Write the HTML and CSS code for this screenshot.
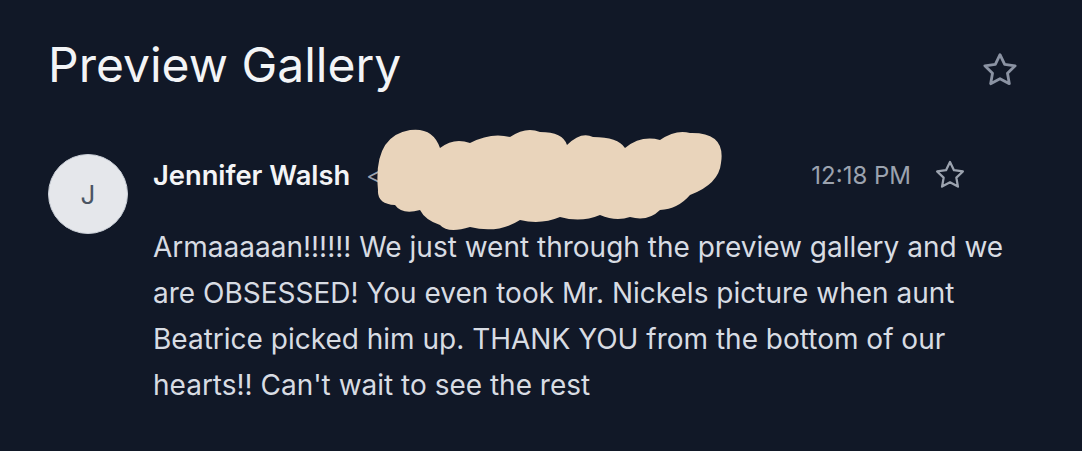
FILE: index.html
```html
<!DOCTYPE html>
<html lang="en">
<head>
  <meta charset="UTF-8" />
  <meta name="viewport" content="width=device-width, initial-scale=1.0"/>
  <title>Preview Gallery</title>
  <link rel="stylesheet" href="styles.css">
</head>
<body>
  <div class="thread">
    <div class="thread-header">
      <h1>Preview Gallery</h1>
      <button class="star-btn big" aria-label="Star thread">
        <svg viewBox="0 0 24 24" width="40" height="40"><path d="M12 2.8l2.8 5.8 6.3.9-4.6 4.4 1.1 6.3L12 17.2l-5.6 3 1.1-6.3-4.6-4.4 6.3-.9z"/></svg>
      </button>
    </div>

    <div class="message">
      <div class="avatar">J</div>
      <div class="message-body">
        <div class="message-meta">
          <span class="sender">Jennifer Walsh</span>
          <span class="email">&lt;</span>
          <!-- redacted address -->
          <svg class="redact" viewBox="0 0 350 105" width="350" height="105">
            <path fill="#e9d4bb" d="M2,62 Q-3,8 34,2 Q57,-1 64,20 Q78,9 94,15 Q115,4 134,9 Q150,-2 164,4 Q187,4 191,17 Q205,3 217,9 Q242,9 249,20 Q265,7 284,12 Q300,1 314,5 Q350,4 345,35 Q343,56 314,67 Q302,81 284,82 Q272,94 254,89 Q240,94 224,87 Q205,95 184,89 Q165,97 144,92 Q122,106 94,99 Q72,106 64,97 Q49,92 44,82 Q26,87 19,77 Q1,76 2,62 Z"/>
          </svg>
          <span class="time">12:18 PM</span>
          <button class="star-btn" aria-label="Star message">
            <svg viewBox="0 0 24 24" width="34" height="34"><path d="M12 2.8l2.8 5.8 6.3.9-4.6 4.4 1.1 6.3L12 17.2l-5.6 3 1.1-6.3-4.6-4.4 6.3-.9z"/></svg>
          </button>
        </div>
        <p class="text">Armaaaaan!!!!!! We just went through the preview gallery and we are OBSESSED! You even took Mr. Nickels picture when aunt Beatrice picked him up. THANK YOU from the bottom of our hearts!! Can't wait to see the rest</p>
      </div>
    </div>
  </div>
</body>
</html>
```

FILE: styles.css
```css
body {
  margin: 0;
  background: #111827;
  font-family: 'Inter', 'Noto Sans', sans-serif;
  color: #e5e7eb;
}

.thread {
  padding: 34px 48px 0 48px;
}

.thread-header {
  display: flex;
  align-items: center;
  justify-content: space-between;
  padding-right: 14px;
}

h1 {
  margin: 0;
  font-size: 48px;
  font-weight: 400;
  color: #f3f4f6;
  line-height: 62px;
}

.star-btn {
  background: none;
  border: none;
  padding: 0;
  cursor: pointer;
  display: flex;
}

.star-btn svg {
  fill: none;
  stroke: #9ca3af;
  stroke-width: 1.6;
  stroke-linejoin: round;
}

.star-btn.big {
  margin-top: 9px;
}

.star-btn.big svg {
  stroke: #8b93a3;
  stroke-width: 1.7;
}

.message {
  display: flex;
  align-items: flex-start;
  gap: 25px;
  margin-top: 58px;
}

.avatar {
  flex: none;
  width: 78px;
  height: 78px;
  border-radius: 50%;
  background: #e5e7eb;
  border: 1px solid #cbd0d8;
  color: #4b5563;
  font-size: 26px;
  display: flex;
  align-items: center;
  justify-content: center;
}

.message-body {
  flex: 1;
}

.message-meta {
  position: relative;
  display: flex;
  align-items: center;
  height: 48px;
  margin-top: -3px;
  padding-right: 67px;
}

.sender {
  font-size: 27.3px;
  font-weight: 600;
  color: #f3f4f6;
}

.email {
  margin-left: 16px;
  font-size: 22px;
  color: #9ca3af;
}

.redact {
  position: absolute;
  left: 223px;
  top: -23px;
}

.time {
  margin-left: auto;
  margin-right: 22px;
  font-size: 24px;
  color: #9ca3af;
}

.text {
  margin: 25px 0 0;
  font-size: 28px;
  line-height: 46px;
  color: #d8dce3;
}
```
